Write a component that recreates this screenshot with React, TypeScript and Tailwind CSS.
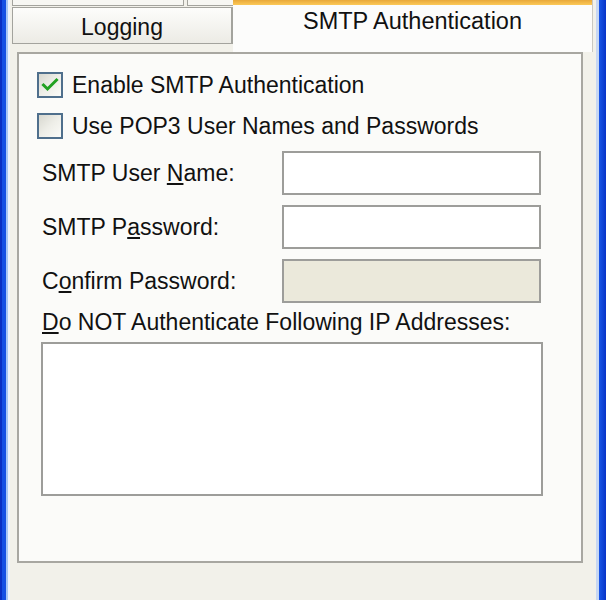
import React from "react";

const font = { fontFamily: '"Liberation Sans", Arial, sans-serif' };

const CheckBox = ({ checked }: { checked?: boolean }) => {
  return (
    <div className="w-[26px] h-[26px] border-2 border-[#4f6f8c] bg-gradient-to-br from-[#d8d8d0] via-[#eeeee8] to-[#fbfbf8] flex items-center justify-center shrink-0">
      {checked && (
        <svg width="18" height="16" viewBox="0 0 18 16">
          <path
            d="M2.5 8 L6.5 12 L15.5 3"
            fill="none"
            stroke="#21a121"
            strokeWidth="3"
            strokeLinecap="square"
          />
        </svg>
      )}
    </div>
  );
};

const Row = ({
  label,
  disabled,
}: {
  label: React.ReactNode;
  disabled?: boolean;
}) => {
  return (
    <div className="flex items-center">
      <div className="w-[263px] pl-[23px] text-[23px] leading-[26px] text-[#111]">
        {label}
      </div>
      <div
        className={`w-[259px] h-[44px] border-2 border-[#9d9d9a] ${
          disabled ? "bg-[#ebe9db]" : "bg-white"
        }`}
      />
    </div>
  );
};

export default function App() {
  return (
    <div className="w-[606px] h-[600px] flex overflow-hidden" style={font}>
      <div className="w-[2px] bg-[#0a2fc4]" />
      <div className="w-[4px] bg-[#1650e4]" />
      <div className="w-[2px] bg-[#a8c6f6]" />
      <div className="w-[2px] bg-[#eef3fb]" />

      <div className="flex-1 flex flex-col bg-[#f2f1ea]">
        {/* tabs */}
        <div className="flex items-start h-[52px]">
          <div className="w-[2px]" />
          <div className="w-[221px] flex flex-col">
            <div className="flex h-[6px]">
              <div className="w-[172px] border-l border-r border-b border-[#a3a39d] bg-[#f7f7f3]" />
              <div className="w-[3px]" />
              <div className="flex-1 border-l border-b border-[#a3a39d] bg-[#f7f7f3]" />
            </div>
            <div className="h-[1px]" />
            <div className="h-[37px] pt-[3px] border border-[#a3a39d] border-r-2 bg-gradient-to-b from-[#fdfdfb] to-[#ecebe5] flex items-center justify-center text-[23px] text-[#111]">
              Logging
            </div>
          </div>
          <div className="w-[360px] h-[52px] flex flex-col bg-[#fcfcfb] border-r border-[#c9c8c2]">
            <div className="h-[5px] bg-gradient-to-b from-[#e8a83a] to-[#fcc957]" />
            <div className="h-[33px] flex items-center justify-center text-[23.5px] text-[#111]">
              SMTP Authentication
            </div>
          </div>
        </div>

        {/* page body */}
        <div className="ml-[7px] w-[566px] h-[511px] border-2 border-[#a8a7a1] bg-[#fbfbf9] flex flex-col">
          <div className="mt-[18px] pl-[18px] flex items-center gap-[9px]">
            <CheckBox checked />
            <span className="text-[23px] leading-[26px] text-[#111]">
              Enable SMTP Authentication
            </span>
          </div>
          <div className="mt-[15px] pl-[18px] flex items-center gap-[9px]">
            <CheckBox />
            <span className="text-[23px] leading-[26px] text-[#111]">
              Use POP3 User Names and Passwords
            </span>
          </div>

          <div className="mt-[12px] flex flex-col gap-[10px]">
            <Row
              label={
                <>
                  SMTP User <u className="underline-offset-2">N</u>ame:
                </>
              }
            />
            <Row
              label={
                <>
                  SMTP P<u className="underline-offset-2">a</u>ssword:
                </>
              }
            />
            <Row
              disabled
              label={
                <>
                  C<u className="underline-offset-2">o</u>nfirm Password:
                </>
              }
            />
          </div>

          <div className="mt-[6px] pl-[23px] text-[23px] leading-[26px] text-[#111]">
            <u className="underline-offset-2">D</u>o NOT Authenticate Following
            IP Addresses:
          </div>
          <div className="mt-[7px] ml-[22px] w-[502px] h-[154px] border-2 border-[#9d9d9a] bg-white" />
        </div>
      </div>

      <div className="w-[3px] bg-[#c7d7f3]" />
      <div className="w-[7px] bg-gradient-to-r from-[#1a56e6] to-[#0834c8]" />
    </div>
  );
}
